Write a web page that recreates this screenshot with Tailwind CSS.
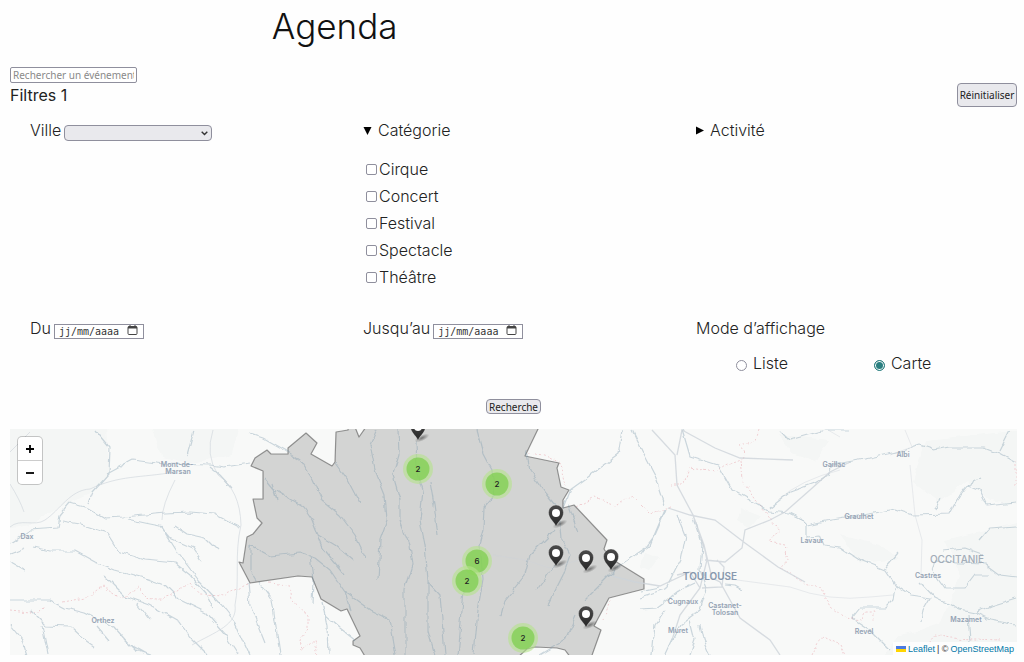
<!DOCTYPE html>
<html lang="fr">
<head>
    <meta charset="UTF-8">
    <meta name="viewport" content="width=device-width, initial-scale=1.0">
    <title>Agenda</title>
    <script src="https://cdn.jsdelivr.net/npm/@tailwindcss/browser@4"></script>
</head>
<body class="bg-[#fefefe] pr-[7px] pb-2 pl-[10px] font-['Inter',sans-serif] text-base font-light text-[#222222]">
    <header class="pl-[26%]">
        <h1 class="text-[35px] leading-[52px] text-[#111111]">Agenda</h1>
    </header>

    <main class="pt-[15px]">
        <form>
            <input type="text" aria-label="Rechercher un événement" placeholder="Rechercher un événement..." class="block h-4 w-[127px] appearance-none rounded-xs border border-[#8f8f9d] bg-white px-[2px] font-['Noto_Sans',sans-serif] text-[10px] leading-3 font-normal placeholder:text-[#8a8a8a]">

            <div class="flex h-6 justify-between">
                <h2 class="leading-6 font-normal">Filtres 1</h2>
                <button type="reset" class="h-6 w-[60px] rounded-sm border border-[#8f8f9d] bg-[#e9e9ed] font-['Noto_Sans',sans-serif] text-[10px] font-normal whitespace-nowrap">Réinitialiser</button>
            </div>

            <div class="grid grid-cols-3 gap-5 pt-2 pr-2 pl-5">
                <div class="flex items-start gap-[3px] pt-[2px]">
                    <label for="ville" class="leading-[27px]">Ville</label>
                    <div class="relative mt-2">
                        <select id="ville" class="block h-4 w-[148px] appearance-none rounded-sm border border-[#8f8f9d] bg-[#e9e9ed] text-[10px]">
                            <option value=""></option>
                        </select>
                        <svg class="pointer-events-none absolute top-[6px] right-1 h-[5px] w-[7px]" viewBox="0 0 7 5" fill="none" stroke="#333" stroke-width="1.4"><path d="M.7.8 3.5 3.6 6.3.8"/></svg>
                    </div>
                </div>

                <details open class="pt-[2px]">
                    <summary class="flex list-none items-center gap-[6px] leading-[27px]">
                        <svg class="h-2 w-[9px]" viewBox="0 0 9 8"><path d="M.5 0h8l-4 8z" fill="#000"/></svg>
                        Catégorie
                    </summary>
                    <div class="pt-3 pl-[3px] leading-[27px]">
                        <label class="flex items-center gap-[2px]"><input type="checkbox" name="categorie" class="size-[11px] appearance-none rounded-xs border border-[#8f8f9d] bg-white checked:bg-[#2a7f80]">Cirque</label>
                        <label class="flex items-center gap-[2px]"><input type="checkbox" name="categorie" class="size-[11px] appearance-none rounded-xs border border-[#8f8f9d] bg-white checked:bg-[#2a7f80]">Concert</label>
                        <label class="flex items-center gap-[2px]"><input type="checkbox" name="categorie" class="size-[11px] appearance-none rounded-xs border border-[#8f8f9d] bg-white checked:bg-[#2a7f80]">Festival</label>
                        <label class="flex items-center gap-[2px]"><input type="checkbox" name="categorie" class="size-[11px] appearance-none rounded-xs border border-[#8f8f9d] bg-white checked:bg-[#2a7f80]">Spectacle</label>
                        <label class="flex items-center gap-[2px]"><input type="checkbox" name="categorie" class="size-[11px] appearance-none rounded-xs border border-[#8f8f9d] bg-white checked:bg-[#2a7f80]">Théâtre</label>
                    </div>
                </details>

                <details class="pt-[2px]">
                    <summary class="flex list-none items-center gap-[6px] leading-[27px]">
                        <svg class="h-[9px] w-2" viewBox="0 0 8 9"><path d="M0 .5v8l8-4z" fill="#000"/></svg>
                        Activité
                    </summary>
                </details>
            </div>

            <div class="grid grid-cols-3 gap-5 pt-6 pr-2 pl-5">
                <div class="flex items-start gap-[3px]">
                    <label for="du" class="leading-[27px]">Du</label>
                    <div class="mt-[9px] flex h-[15px] w-[90px] items-center border border-[#8f8f9d] bg-white px-1">
                        <input id="du" type="text" placeholder="jj/mm/aaaa" class="w-[68px] font-['DejaVu_Sans_Mono',monospace] text-[10px] leading-3 font-normal placeholder:text-[#333333]">
                        <button type="button" aria-label="Choisir une date" class="mb-1">
                            <svg class="h-[10px] w-[11px]" viewBox="0 0 11 10" fill="none" stroke="#444"><rect x="1" y="1.5" width="9" height="8" rx="1"/><path d="M1 2.5h9" stroke-width="2"/><path d="M3 0v2M8 0v2"/></svg>
                        </button>
                    </div>
                </div>
                <div class="flex items-start gap-[3px]">
                    <label for="au" class="leading-[27px]">Jusqu’au</label>
                    <div class="mt-[9px] flex h-[15px] w-[90px] items-center border border-[#8f8f9d] bg-white px-1">
                        <input id="au" type="text" placeholder="jj/mm/aaaa" class="w-[68px] font-['DejaVu_Sans_Mono',monospace] text-[10px] leading-3 font-normal placeholder:text-[#333333]">
                        <button type="button" aria-label="Choisir une date" class="mb-1">
                            <svg class="h-[10px] w-[11px]" viewBox="0 0 11 10" fill="none" stroke="#444"><rect x="1" y="1.5" width="9" height="8" rx="1"/><path d="M1 2.5h9" stroke-width="2"/><path d="M3 0v2M8 0v2"/></svg>
                        </button>
                    </div>
                </div>
                <fieldset>
                    <legend class="leading-[27px]">Mode d’affichage</legend>
                    <div class="flex gap-[86px] pt-2 pl-10 leading-[27px]">
                        <label class="flex items-center gap-[6px]"><input type="radio" name="mode" class="mt-[3px] size-[11px] appearance-none rounded-full border border-[#8f8f9d] bg-white">Liste</label>
                        <label class="flex items-center gap-[6px]"><input type="radio" name="mode" checked class="mt-[3px] size-[11px] appearance-none rounded-full border border-[#2a7f80] bg-[#2a7f80] inset-ring inset-ring-white">Carte</label>
                    </div>
                </fieldset>
            </div>

            <div class="flex justify-center pt-[22px] pb-[15px]">
                <button type="submit" class="h-[15px] w-[55px] rounded-sm border border-[#8f8f9d] bg-[#e9e9ed] font-['Noto_Sans',sans-serif] text-[10px] leading-3 font-normal">Recherche</button>
            </div>
        </form>

        <section aria-label="Carte des événements" class="relative overflow-hidden bg-[#f8f9f8]">
            <svg class="block h-[226px] w-full" viewBox="10 429 1007 226" preserveAspectRatio="xMidYMid slice">
                <defs>
                    <filter id="wobble" x="0" y="420" width="1030" height="240" filterUnits="userSpaceOnUse">
                        <feTurbulence type="fractalNoise" baseFrequency="0.09" numOctaves="2" seed="4" result="n"/>
                        <feDisplacementMap in="SourceGraphic" in2="n" scale="6" xChannelSelector="R" yChannelSelector="G"/>
                    </filter>
                    <radialGradient id="shade"><stop offset="0" stop-color="#000" stop-opacity=".45"/><stop offset="1" stop-color="#000" stop-opacity="0"/></radialGradient>
                    <linearGradient id="dark" x1="0" y1="0" x2="0" y2="1"><stop offset="0" stop-color="#4a4a4a"/><stop offset="1" stop-color="#262626"/></linearGradient>
                    <g id="pin">
                        <ellipse cx="4" cy="-3" rx="8" ry="3" transform="rotate(-25 4 -3)" fill="url(#shade)"/>
                        <path d="M0 0C-1-5-7.500-8-7.500-14.500A7.500 7.500 0 0 1 7.500-14.500C7.500-8 1-5 0 0z" fill="url(#dark)" stroke="#fff" stroke-opacity=".5" stroke-width=".6"/>
                        <circle cy="-14" r="4" fill="#fff"/>
                    </g>
                    <g id="cluster">
                        <circle r="15" fill="#b5e28c" fill-opacity=".6"/>
                        <circle r="11.500" fill="#6ecc39" fill-opacity=".6"/>
                    </g>
                </defs>

                <!-- woodland -->
                <g fill="#f4f6f5" filter="url(#wobble)">
                    <path d="M0 420H107L109 474 92 493 62 506 30 525 0 530zM150 420h90l-8 35-40 8-30-6z"/>
                    <path d="M925 440l100-10v75l-35-5-22-20-30 22-25-20zM945 540l80-20v140H880l20-25 40-10 20-50zM780 435l50 5-15 22-22-8zM740 508l20 8-10 12-14-8zM645 553l14 4-10 14-9-4zM840 535l40 10 20 14-40 4z"/>
                </g>

                <!-- borders between departments -->
                <g fill="none" stroke="#f0cfd2" stroke-dasharray="2 2" filter="url(#wobble)">
                    <path d="M62 602 85 598 103 586 122 598 138 588 150 600 170 596 190 582 200 594 225 595 250 583M10 610 40 613 45 605M270 583 290 585 292 600 308 615 308 630 300 640 302 650 315 640 318 655"/>
                    <path d="M528 453 545 455 560 463 565 485M577 507 595 497 615 505 632 495 650 513 672 508M760 430 757 440 740 445 745 457 725 465 715 472 690 468 685 485 670 485M740 460 742 480 755 500 768 515 780 530 770 542 785 545 788 560 780 567 805 583 820 587 832 608 845 618 862 620 865 612 875 612 872 622M812 655 818 642 824 637 840 645 845 655M925 648 935 635 950 638 1000 640M1016 460V485M610 600 603 620"/>
                </g>

                <!-- department -->
                <path fill="#000" fill-opacity=".15" stroke="#555" stroke-opacity=".6" stroke-width="1.200" stroke-linejoin="round" d="M348 427 348 430 336 432 335 462 332 466 311 454 317 443 306 433 288 448 288 454 271 454 267 450 255 458 251 466 263 471 263 499 253 499 257 518 262 523 253 534 247 537 243 563 239 562 250 583 298 576 312 577 321 599 341 611 347 609 360 636 353 641 353 645 360 648 366 658 517 658 527 649 535 647 557 648 565 650 571 658 591 658 601 630 594 626 609 598 644 589 644 579 610 558 604 549 607 540 574 505 563 508 563 500 569 490 561 487 557 468 559 463 525 456 539 427 366 427 359 437 355 427z"/>

                <!-- rivers -->
                <g fill="none" stroke="#7f9aae" stroke-opacity=".38" stroke-width="1.200" stroke-linejoin="round" filter="url(#wobble)">
                    <path d="M95 430 110 448 109 474 92 493 88 503M107 474 133 460 165 464 210 465 225 467 250 463M194 430 187 456M70 503 88 508 105 518 122 517 145 515 165 513 190 512 215 514 240 527M127 519 145 523 160 526 170 538 193 548 201 560M10 543 30 530 58 528 60 515 70 503M161 526 178 553 200 582 220 603 235 622 250 655M175 526 187 534 205 538 218 551M62 521 80 524 108 533 120 552 145 560 175 563 190 575 205 592 213 608"/>
                    <path d="M10 554 25 548M33 547 50 551 75 551 95 562 115 570 145 578 165 585 180 600 205 612 225 635 238 655M105 576 125 596 150 605 180 622 190 637 208 655M137 603 150 620M10 600 50 600 65 608 85 613 115 628 130 645 148 655M30 610 45 625 70 626 85 640 95 647M42 625 45 640 48 655M10 625 22 640 27 655M97 627 108 640M125 640 135 650 150 655M210 467 220 475 232 488M10 562 24 570"/>
                    <path d="M250 433 262 437 285 450 300 460 313 480 322 500 340 515 355 535 366 558M265 478 275 490 303 507 312 520 318 535 335 545 353 560M316 532 322 547 345 575M335 462 348 480 360 503M250 545 270 556 300 553 315 558 330 570 345 592 370 610 390 620 396 655M377 429 370 445 375 470 385 495 387 520 380 540 378 580M398 429 399 455 393 475 400 500 400 520 410 545 413 565 405 590 405 655M416 440 417 470 423 490 420 520 425 545 428 580 428 630 435 655M430 482 434 505 438 535M428 582 440 595 445 655M310 555 313 580 312 605M345 592 350 610M248 583 250 605 265 643M260 583 272 600 280 655M322 602 327 625 328 655M325 615 340 628 355 640M250 545 250 570 257 582M273 483 278 500"/>
                    <path d="M477 430 483 453 492 470 495 495 485 507 484 530 480 545 483 580 478 610 474 655M464 590 458 655M526 450 530 470 545 492 560 510 562 540 570 555 563 575 548 605M555 530 530 555 525 575 505 600 501 615M568 505 578 532M555 565 537 590M540 655 565 640 576 615M585 600 620 565 650 545 665 510M563 508 570 490 595 472 618 455 622 430M632 430 642 450 655 475 665 505M666 510 655 535 640 555"/>
                    <path d="M677 515 685 535 680 560 665 590 640 598M693 517 702 545 700 570 707 588 700 610 680 625 672 640 665 655M682 429 690 456 718 465 732 490 760 506 768 511 790 513 800 518 807 525 825 521 850 517 875 513 895 509 912 515 950 514 960 495 968 485 980 490 987 505 1016 502M770 508 790 492 815 483 828 475 832 465 870 458 905 450 920 445 935 450 950 447 985 447 1000 453 1016 462M640 609 656 608 680 590 695 583M652 655 655 625 665 610M640 592 660 588M725 585 735 586 742 590M780 430 790 440 825 430 850 430M806 525 806 537 820 536 824 545 840 547 860 560 885 570 895 585 910 595 930 598 923 610 921 622M895 587 893 600 885 608 860 608 852 618 870 630 890 650M885 568 898 553"/>
                    <path d="M920 582 935 598 960 610 975 613 990 606 1016 598M932 570 945 588 965 588 975 575 990 575M943 550 965 548 982 554M932 570 935 562 985 564 1000 575 1016 577M980 540 990 528 1016 526M975 613 990 620 1016 625M968 615 970 642M1000 450 1010 430M935 509 940 498M968 485 982 478M700 625 703 640 710 655M690 620 695 640 690 655"/>
                </g>

                <!-- roads -->
                <g fill="none" stroke="#cdd3da" stroke-opacity=".8">
                    <path stroke-opacity=".6" d="M10 527C20 518 35 527 45 520 60 510 70 490 90 489 120 475 140 478 175 472M175 480Q162 505 162 520M213 430Q205 455 218 475 240 490 241 525C234 555 240 580 235 605 238 625 215 632 192 645M10 484Q20 500 24 512M10 452 30 432"/>
                    <path stroke-width="1.300" d="M652 430 675 455 677 485 693 515 704 545 712 578 720 582 740 618 770 640 780 655M682 430 677 455M682 430 715 448 740 458 793 460M668 508 690 515 715 520 745 543 778 567 805 582M705 560 725 562 742 548 745 530 770 520 785 512 810 490 830 472 850 462M693 515 705 550 707 560 700 588 680 615 672 640M702 588 722 587 724 567 717 560M677 575 690 572 700 588M612 576 635 582 660 586 690 572"/>
                    <path stroke-opacity=".4" d="M778 500Q800 480 840 470M905 430 912 447 890 455M910 465 915 515 922 540 921 575M722 578 790 587Q830 602 870 597L893 595M493 555 525 560 550 568 580 560M828 430 840 437"/>
                </g>

                <!-- place names -->
                <g fill="#95a3b4" font-family="Inter, sans-serif" font-size="7" font-weight="600" text-anchor="middle">
                    <text x="177" y="467">Mont-de-</text>
                    <text x="178" y="474">Marsan</text>
                    <text x="27" y="539">Dax</text>
                    <text x="103" y="623">Orthez</text>
                    <text x="834" y="467">Gaillac</text>
                    <text x="903" y="457">Albi</text>
                    <text x="859" y="519">Graulhet</text>
                    <text x="812" y="543">Lavaur</text>
                    <text x="928" y="578">Castres</text>
                    <text x="683" y="604">Cugnaux</text>
                    <text x="725" y="608">Castanet-</text>
                    <text x="725" y="615">Tolosan</text>
                    <text x="678" y="633">Muret</text>
                    <text x="864" y="634">Revel</text>
                    <text x="966" y="622">Mazamet</text>
                    <text x="710" y="580" font-size="10" fill="#8798ae">TOULOUSE</text>
                    <text x="957" y="563" font-size="10" font-weight="500" fill="#a3adb8">OCCITANIE</text>
                </g>

                <!-- markers -->
                <use href="#pin" x="418" y="441"/>
                <use href="#pin" x="556" y="527"/>
                <use href="#pin" x="556" y="567"/>
                <use href="#pin" x="586" y="572"/>
                <use href="#pin" x="611" y="571"/>
                <use href="#pin" x="586" y="628"/>
                <use href="#cluster" x="418" y="469"/>
                <use href="#cluster" x="497" y="484"/>
                <use href="#cluster" x="477" y="561"/>
                <use href="#cluster" x="467" y="581"/>
                <use href="#cluster" x="523" y="638"/>
                <g fill="#222" font-family="Inter, sans-serif" font-size="8" font-weight="500" text-anchor="middle">
                    <text x="418" y="472">2</text>
                    <text x="497" y="487">2</text>
                    <text x="477" y="564">6</text>
                    <text x="467" y="584">2</text>
                    <text x="523" y="641">2</text>
                </g>
            </svg>

            <div class="absolute top-2 left-2 flex flex-col rounded-sm bg-white ring-1 ring-black/20">
                <button type="button" aria-label="Zoom avant" class="flex size-6 items-center justify-center border-b border-[#cccccc]">
                    <svg class="size-2" viewBox="0 0 8 8" stroke="#000" stroke-width="1.800"><path d="M0 4h8M4 0v8"/></svg>
                </button>
                <button type="button" aria-label="Zoom arrière" class="flex h-[23px] w-6 items-center justify-center">
                    <svg class="size-2" viewBox="0 0 8 8" stroke="#000" stroke-width="1.800"><path d="M0 4h8"/></svg>
                </button>
            </div>

            <div class="absolute right-0 bottom-0 flex h-[13px] items-center gap-[2px] bg-white/80 px-[3px] font-['Liberation_Sans',sans-serif] text-[9px] leading-3 font-normal whitespace-nowrap text-[#333333]">
                <svg class="h-[6px] w-[10px]" viewBox="0 0 10 6"><path d="M0 0h10v3H0z" fill="#4c7be1"/><path d="M0 3h10v3H0z" fill="#ffd500"/></svg>
                <a href="#" class="text-[#0078a8]">Leaflet</a>
                <span>| ©</span>
                <a href="#" class="text-[#0078a8]">OpenStreetMap</a>
            </div>
        </section>
    </main>
</body>
</html>
